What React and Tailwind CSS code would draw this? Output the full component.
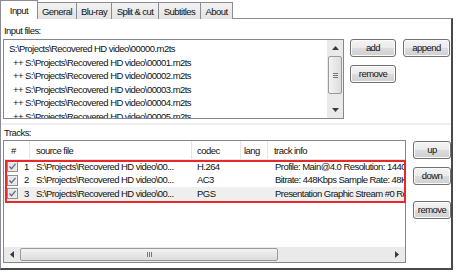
import React from "react";

const font = { fontFamily: '"Liberation Sans", Arial, sans-serif', letterSpacing: "-0.55px" };

function Btn({ children, className = "" }) {
  return (
    <div
      className={
        "flex items-center justify-center whitespace-nowrap rounded-[3px] border border-[#707070] text-[9.5px] text-[#111] bg-[linear-gradient(#f4f4f4_0%,#ebebeb_48%,#dcdcdc_52%,#cfcfcf_100%)] shadow-[inset_0_0_0_1px_#fbfbfb] " +
        className
      }
    >
      {children}
    </div>
  );
}

function Tab({ label, active, w }) {
  if (active) {
    return (
      <div
        className="relative z-10 flex h-[19px] items-start justify-center whitespace-nowrap border border-b-0 border-[#898c95] bg-white pt-[3px] text-[9.5px] leading-[13px] text-[#111]"
        style={{ width: w }}
      >
        {label}
      </div>
    );
  }
  return (
    <div
      className="mt-[2px] -ml-px flex h-[17px] items-start justify-center whitespace-nowrap border border-b-0 border-[#898c95] bg-[linear-gradient(#f2f2f2,#e3e3e3)] pt-[2px] text-[9.5px] leading-[13px] text-[#111]"
      style={{ width: w }}
    >
      {label}
    </div>
  );
}

function Check() {
  return (
    <svg width="11" height="11" viewBox="0 0 11 11" className="shrink-0">
      <rect x="0.5" y="0.5" width="10" height="10" fill="#f4f4f4" stroke="#8e8f8f" />
      <rect x="1.5" y="1.5" width="8" height="8" fill="#e6e6e6" />
      <path d="M2.5 5.5 L4.5 7.8 L8.5 2.8" fill="none" stroke="#5b6b80" strokeWidth="1.3" />
    </svg>
  );
}

const files = [
  "S:\\Projects\\Recovered HD video\\00000.m2ts",
  "++ S:\\Projects\\Recovered HD video\\00001.m2ts",
  "++ S:\\Projects\\Recovered HD video\\00002.m2ts",
  "++ S:\\Projects\\Recovered HD video\\00003.m2ts",
  "++ S:\\Projects\\Recovered HD video\\00004.m2ts",
  "++ S:\\Projects\\Recovered HD video\\00005.m2ts",
];

const tracks = [
  ["1", "H.264", "Profile: Main@4.0  Resolution: 1440x1080i  Frame rate: 29.97"],
  ["2", "AC3", "Bitrate: 448Kbps Sample Rate: 48KHz Channels: 5.1"],
  ["3", "PGS", "Presentation Graphic Stream #0 Resolution"],
];

export default function App() {
  return (
    <div className="h-[273px] w-[456px] overflow-hidden bg-white text-[#111]" style={font}>
      {/* tabs */}
      <div className="flex h-[19px] items-start">
        <Tab label="Input" active w={38} />
        <Tab label="General" w={40} />
        <Tab label="Blu-ray" w={36} />
        <Tab label="Split & cut" w={48} />
        <Tab label="Subtitles" w={43} />
        <Tab label="About" w={33} />
      </div>
      {/* panel */}
      <div className="-mt-px h-[252px] w-[453px] border-t border-l border-[#898c95] border-r-2 border-r-[#4a4a4a] border-b-2 border-b-[#4a4a4a] bg-white">
        <div className="h-[20px] pl-[3px] pt-[5px] text-[9.5px] leading-[13px]">Input files:</div>
        <div className="flex">
          {/* listbox */}
          <div className="ml-[2px] flex h-[80px] w-[341px] border border-[#828790] bg-white">
            <div className="flex-1 overflow-hidden pt-[2px] text-[9.5px]">
              {files.map((f, i) => (
                <div
                  key={i}
                  className={"h-[13.6px] whitespace-nowrap leading-[13.6px] " + (i === 0 ? "pl-[5px]" : "pl-[9px]")}
                >
                  {f}
                </div>
              ))}
            </div>
            <div className="flex w-[16px] flex-col bg-[#eaeaea]">
              <div className="flex h-[16px] items-center justify-center">
                <svg width="7" height="4" viewBox="0 0 7 4"><path d="M0 4 L3.5 0 L7 4Z" fill="#3a3a3a" /></svg>
              </div>
              <div className="mx-[1px] flex h-[38px] items-center justify-center rounded-[2px] border border-[#9a9a9a] bg-[linear-gradient(90deg,#f3f3f3,#dcdcdc)]">
                <div className="flex flex-col gap-[1px]">
                  <div className="h-px w-[5px] bg-[#777]" />
                  <div className="h-px w-[5px] bg-[#777]" />
                  <div className="h-px w-[5px] bg-[#777]" />
                </div>
              </div>
              <div className="flex-1" />
              <div className="flex h-[16px] items-center justify-center">
                <svg width="7" height="4" viewBox="0 0 7 4"><path d="M0 0 L3.5 4 L7 0Z" fill="#3a3a3a" /></svg>
              </div>
            </div>
          </div>
          <div className="ml-[6px] flex flex-col gap-[8px]">
            <div className="flex gap-[7px]">
              <Btn className="h-[18px] w-[46px]">add</Btn>
              <Btn className="h-[18px] w-[47px]">append</Btn>
            </div>
            <Btn className="h-[18px] w-[46px]">remove</Btn>
          </div>
        </div>
        {/* separator */}
        <div className="mt-[4px] h-[2px] w-full bg-[#eeeeee]" />
        <div className="h-[15px] pl-[3px] pt-[1px] text-[9.5px] leading-[13px]">Tracks:</div>
        <div className="flex">
          {/* listview */}
          <div className="relative ml-[2px] flex h-[123px] w-[404px] flex-col border border-[#828790] bg-white text-[9.5px]">
            <div className="flex h-[19px] shrink-0 items-center border-b border-[#e5e5e5] whitespace-nowrap">
              <div className="w-[26px] border-r border-[#e5e5e5] pl-[7px] leading-[19px]">#</div>
              <div className="w-[162px] border-r border-[#e5e5e5] pl-[6px] leading-[19px]">source file</div>
              <div className="w-[49px] border-r border-[#e5e5e5] pl-[5px] leading-[19px]">codec</div>
              <div className="w-[27px] border-r border-[#e5e5e5] pl-[3px] leading-[19px]">lang</div>
              <div className="flex-1 pl-[6px] leading-[19px]">track info</div>
            </div>
            <div className="flex-1 overflow-hidden">
              {tracks.map((t, i) => (
                <div
                  key={i}
                  className={"flex h-[13.6px] items-center whitespace-nowrap " + (i === 2 ? "bg-[#efefef]" : "")}
                >
                  <div className="flex w-[26px] items-center pl-[3px]">
                    <Check />
                    <span className="ml-[6px]">{t[0]}</span>
                  </div>
                  <div className="w-[162px] overflow-hidden pl-[6px]">S:\Projects\Recovered HD video\00...</div>
                  <div className="w-[49px] overflow-hidden pl-[5px]">{t[1]}</div>
                  <div className="w-[27px]" />
                  <div className="w-[136px] overflow-hidden pl-[7px]">{t[2]}</div>
                </div>
              ))}
            </div>
            {/* horizontal scrollbar */}
            <div className="flex h-[15px] shrink-0 items-center bg-[#eaeaea]">
              <div className="flex w-[16px] items-center justify-center">
                <svg width="4" height="7" viewBox="0 0 4 7"><path d="M4 0 L0 3.5 L4 7Z" fill="#3a3a3a" /></svg>
              </div>
              <div className="flex h-[13px] w-[258px] items-center justify-center rounded-[2px] border border-[#9a9a9a] bg-[linear-gradient(#f3f3f3,#dcdcdc)]">
                <div className="flex gap-[1px]">
                  <div className="h-[5px] w-px bg-[#777]" />
                  <div className="h-[5px] w-px bg-[#777]" />
                  <div className="h-[5px] w-px bg-[#777]" />
                </div>
              </div>
              <div className="flex-1" />
              <div className="flex w-[16px] items-center justify-center">
                <svg width="4" height="7" viewBox="0 0 4 7"><path d="M0 0 L4 3.5 L0 7Z" fill="#3a3a3a" /></svg>
              </div>
            </div>
            {/* red annotation */}
            <div className="pointer-events-none absolute left-[1px] top-[19px] h-[43px] w-[401px] border-2 border-[#e8292c]" />
          </div>
          <div className="ml-[7px] mt-[1px] flex flex-col">
            <Btn className="h-[18px] w-[38px]">up</Btn>
            <Btn className="mt-[8px] h-[18px] w-[38px]">down</Btn>
            <Btn className="mt-[16px] h-[18px] w-[38px]">remove</Btn>
          </div>
        </div>
      </div>
    </div>
  );
}
